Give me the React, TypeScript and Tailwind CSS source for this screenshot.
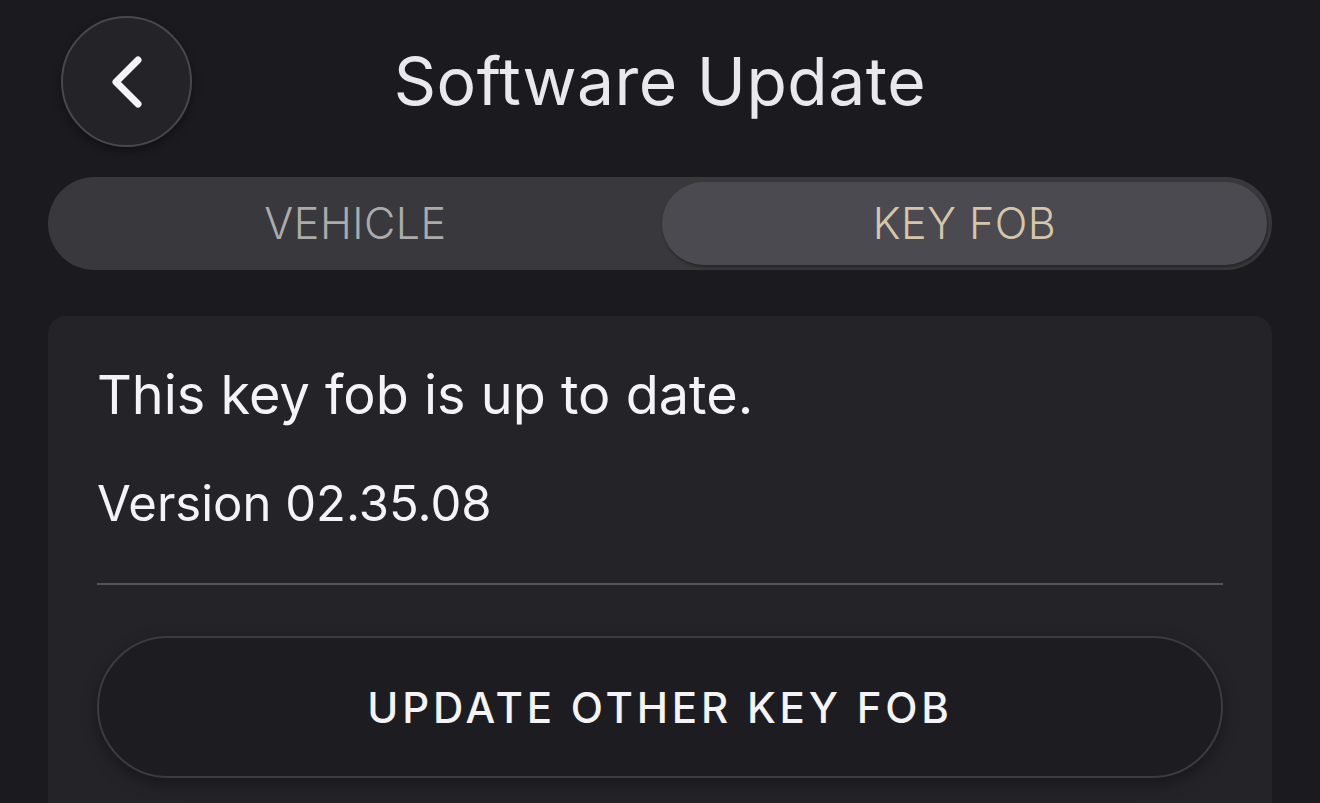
import React, { useState } from 'react'

const ChevronLeft = () => (
  <svg width="40" height="60" viewBox="0 0 40 60" fill="none">
    <path d="M31 8 L9 30 L31 52" stroke="#f4f4f6" strokeWidth="7" strokeLinecap="round" strokeLinejoin="round" />
  </svg>
)

const App = () => {
  const [tab, setTab] = useState<'vehicle' | 'fob'>('fob')

  return (
    <div className="w-[1320px] h-[803px] overflow-hidden bg-[#1b1b1f] px-12 font-['Inter',sans-serif]">
      {/* header */}
      <div className="grid grid-cols-[1fr_auto_1fr] items-center pt-4 h-[161px] items-start">
        <div className="pl-[13px] pt-0">
          <button className="w-[131px] h-[131px] rounded-full border-2 border-[#48484d] bg-[#232328] flex items-center justify-center shadow-[0_4px_10px_rgba(0,0,0,0.35)]">
            <ChevronLeft />
          </button>
        </div>
        <h1 className="text-[66px] text-[#e9e9ec] font-normal tracking-[0.5px] self-center -mt-[14px]">Software Update</h1>
        <div />
      </div>

      {/* tabs */}
      <div className="mt-4 h-[93px] rounded-full bg-[#38383d] p-[5px] grid grid-cols-2 gap-[4px]">
        <button
          onClick={() => setTab('vehicle')}
          className={`rounded-full text-[43px] font-light tracking-[0.5px] ${tab === 'vehicle' ? 'bg-[#4b4a50] text-[#d6c6a8] shadow-[1px_2px_3px_rgba(0,0,0,0.35)]' : 'text-[#ababab]'}`}
        >
          VEHICLE
        </button>
        <button
          onClick={() => setTab('fob')}
          className={`rounded-full text-[43px] font-light tracking-[0.5px] ${tab === 'fob' ? 'bg-[#4b4a50] text-[#d6c6a8] shadow-[1px_2px_3px_rgba(0,0,0,0.35)]' : 'text-[#ababab]'}`}
        >
          KEY FOB
        </button>
      </div>

      {/* card */}
      <div className="mt-[46px] rounded-[18px] bg-[#242428] px-[49px] pt-[47px] pb-10 h-[520px]">
        <p className="text-[54px] leading-[64px] text-[#f4f4f6]">This key fob is up to date.</p>
        <p className="mt-[48px] text-[49px] leading-[58px] text-[#f4f4f6]">Version 02.35.08</p>
        <div className="mt-[50px] h-[2px] bg-[#55555a]" />
        <button className="mt-[51px] w-full h-[142px] rounded-full bg-[#1d1d21] border-2 border-[#3b3b40] shadow-[0_6px_16px_rgba(0,0,0,0.35)] text-[42px] font-medium tracking-[3.8px] text-[#f4f4f6]">
          UPDATE OTHER KEY FOB
        </button>
      </div>
    </div>
  )
}

export default App
